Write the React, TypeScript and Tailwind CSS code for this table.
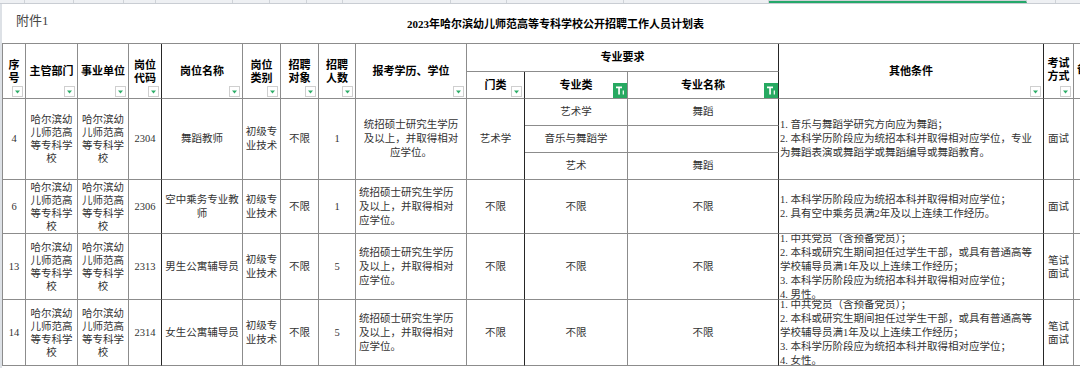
import React from "react";

type CellProps = { children?: React.ReactNode; className?: string; dark?: boolean };

function Cell({ children, className = "", dark = false }: CellProps) {
  return (
    <div
      className={`relative overflow-hidden border-b border-r border-b-[#8c8c8c] ${
        dark ? "border-r-[#262626]" : "border-r-[#8c8c8c]"
      } flex items-center ${className}`}
    >
      {children}
    </div>
  );
}

function Lines({ lines, className = "" }: { lines: string[]; className?: string }) {
  return (
    <div className={className}>
      {lines.map((l, i) => (
        <div key={i} className="whitespace-nowrap">
          {l}
        </div>
      ))}
    </div>
  );
}

function Drop() {
  return (
    <span className="absolute right-[2px] bottom-[1px] w-[11px] h-[11px] bg-white border border-[#cfcfcf] flex items-center justify-center">
      <svg width="5" height="4" viewBox="0 0 5 4">
        <path d="M0 0.5H5L2.5 3.5Z" fill="#2fae69" />
      </svg>
    </span>
  );
}

function Filt() {
  return (
    <span className="absolute right-0 bottom-0 w-[14px] h-[15px] bg-[#27a961] flex items-center justify-center">
      <svg width="10" height="11" viewBox="0 0 10 11">
        <path d="M1 1.5H7V3.2H4.9V9.5H3.2V3.2H1Z" fill="#ffffff" />
        <path d="M8.3 5.5V9.5" stroke="#ffffff" strokeWidth="1.2" />
      </svg>
    </span>
  );
}

const UNIT = ["哈尔滨幼", "儿师范高", "等专科学", "校"];
const CAT = ["初级专", "业技术"];
const EDU = ["统招硕士研究生学历", "及以上，并取得相对", "应学位。"];

const strip = [
  { w: "w-[25px]", sel: false },
  { w: "w-[49px]", sel: false },
  { w: "w-[50px]", sel: false },
  { w: "w-[32px]", sel: false },
  { w: "w-[77px]", sel: false },
  { w: "w-[37px]", sel: false },
  { w: "w-[37px]", sel: false },
  { w: "w-[36px]", sel: false },
  { w: "w-[108px]", sel: false },
  { w: "w-[56px]", sel: false },
  { w: "w-[117px]", sel: false },
  { w: "w-[145px]", sel: false },
  { w: "w-[258px]", sel: true },
  { w: "w-[29px]", sel: false },
  { w: "w-[60px]", sel: false },
];

type RowProps = {
  no: string;
  code: string;
  name: string[];
  count: string;
  other: string[];
  exam: string[];
  eduCenter?: boolean;
};

function DataRow({ no, code, name, count, other, exam, eduCenter = false }: RowProps) {
  return (
    <>
      <Cell className="justify-center">{no}</Cell>
      <Cell className="justify-center">
        <Lines lines={UNIT} className="text-center leading-[13px]" />
      </Cell>
      <Cell className="justify-center">
        <Lines lines={UNIT} className="text-center leading-[13px]" />
      </Cell>
      <Cell className="justify-center" dark>
        {code}
      </Cell>
      <Cell className="justify-center">
        <Lines lines={name} className="text-center leading-[14px]" />
      </Cell>
      <Cell className="justify-center">
        <Lines lines={CAT} className="text-center leading-[14px]" />
      </Cell>
      <Cell className="justify-center">不限</Cell>
      <Cell className="justify-center">{count}</Cell>
      <Cell className={eduCenter ? "justify-center" : "justify-start pl-[3px]"}>
        <Lines lines={EDU} className={eduCenter ? "text-center leading-[14px]" : "text-left leading-[14px]"} />
      </Cell>
      <Cell className="justify-center" dark>
        不限
      </Cell>
      <Cell className="justify-center">不限</Cell>
      <Cell className="justify-center" dark>
        不限
      </Cell>
      <Cell className="justify-start pl-[1px]" dark>
        <Lines lines={other} className="text-left leading-[14px]" />
      </Cell>
      <Cell className="justify-center">
        <Lines lines={exam} className="text-center leading-[13px]" />
      </Cell>
      <Cell className="justify-center" />
    </>
  );
}

export default function App() {
  return (
    <div className="w-[1080px] h-[368px] overflow-hidden bg-white flex flex-col font-['Liberation_Serif','Noto_Sans_CJK_SC',serif] text-[10.5px] text-[#333333]">
      {/* column header strip */}
      <div className="h-[4px] flex bg-[#eef0f3] border-b border-[#c9cdd3] shrink-0">
        {strip.map((s, i) => (
          <div
            key={i}
            className={`${s.w} shrink-0 h-full border-r border-r-[#cfd3d8] ${
              s.sel ? "bg-[#cfd2d6] border-b-2 border-b-[#25a86a]" : ""
            }`}
          />
        ))}
      </div>

      <div className="flex flex-1">
        <div className="w-[2px] shrink-0 bg-[#dde1e6]" />
        <div className="flex flex-col">
          {/* title row */}
          <div className="h-[40px] flex border-b border-[#8c8c8c] w-[1101px]">
            <div className="w-[405px] shrink-0 pt-[9px] pl-[14px] text-[13px] leading-[16px] text-[#454545]">
              附件1
            </div>
            <div className="pt-[13px] text-[11px] leading-[14px] font-bold text-black whitespace-nowrap">
              2023年哈尔滨幼儿师范高等专科学校公开招聘工作人员计划表
            </div>
          </div>

          {/* table grid */}
          <div className="grid grid-cols-[23px_52px_51px_33px_81px_38px_38px_37px_111px_58px_103px_151px_265px_30px_30px] grid-rows-[28px_27px_27px_27px_27px_54px_66px_66px] border-l border-l-[#8c8c8c]">
            {/* header row */}
            <Cell className="row-span-2 justify-center font-bold text-black text-[11px]">
              <Lines lines={["序", "号"]} className="text-center leading-[13px] mt-[2px]" />
              <Drop />
            </Cell>
            <Cell className="row-span-2 justify-center font-bold text-black text-[11px]">
              <span className="mt-[1px]">主管部门</span>
              <Drop />
            </Cell>
            <Cell className="row-span-2 justify-center font-bold text-black text-[11px]">
              <span className="mt-[1px]">事业单位</span>
              <Drop />
            </Cell>
            <Cell className="row-span-2 justify-center font-bold text-black text-[11px]" dark>
              <Lines lines={["岗位", "代码"]} className="text-center leading-[13px] mt-[2px]" />
              <Drop />
            </Cell>
            <Cell className="row-span-2 justify-center font-bold text-black text-[11px]">
              <span className="mt-[1px]">岗位名称</span>
              <Drop />
            </Cell>
            <Cell className="row-span-2 justify-center font-bold text-black text-[11px]">
              <Lines lines={["岗位", "类别"]} className="text-center leading-[13px] mt-[2px]" />
              <Drop />
            </Cell>
            <Cell className="row-span-2 justify-center font-bold text-black text-[11px]">
              <Lines lines={["招聘", "对象"]} className="text-center leading-[13px] mt-[2px]" />
              <Drop />
            </Cell>
            <Cell className="row-span-2 justify-center font-bold text-black text-[11px]">
              <Lines lines={["招聘", "人数"]} className="text-center leading-[13px] mt-[2px]" />
              <Drop />
            </Cell>
            <Cell className="row-span-2 justify-center font-bold text-black text-[11px]">
              <span className="mt-[1px]">报考学历、学位</span>
              <Drop />
            </Cell>
            <Cell className="col-span-3 justify-center font-bold text-black text-[11px]" dark>
              专业要求
            </Cell>
            <Cell className="row-span-2 justify-center font-bold text-black text-[11px]" dark>
              <span className="mt-[1px]">其他条件</span>
              <Drop />
            </Cell>
            <Cell className="row-span-2 justify-center font-bold text-black text-[11px]">
              <Lines lines={["考试", "方式"]} className="text-center leading-[13px] -mt-[2px]" />
              <Drop />
            </Cell>
            <Cell className="row-span-2 justify-start pl-[3px] font-bold text-black text-[11px]">
              <span className="-mt-[4px]">备注</span>
            </Cell>
            {/* header row 2 */}
            <Cell className="justify-center font-bold text-black text-[11px]" dark>
              <span>门类</span>
              <Drop />
            </Cell>
            <Cell className="justify-center font-bold text-black text-[11px]">
              专业类
              <Filt />
            </Cell>
            <Cell className="justify-center font-bold text-black text-[11px]" dark>
              专业名称
              <Filt />
            </Cell>

            {/* row 4 */}
            <Cell className="row-span-3 justify-center">4</Cell>
            <Cell className="row-span-3 justify-center">
              <Lines lines={UNIT} className="text-center leading-[13px]" />
            </Cell>
            <Cell className="row-span-3 justify-center">
              <Lines lines={UNIT} className="text-center leading-[13px]" />
            </Cell>
            <Cell className="row-span-3 justify-center" dark>
              2304
            </Cell>
            <Cell className="row-span-3 justify-center">舞蹈教师</Cell>
            <Cell className="row-span-3 justify-center">
              <Lines lines={CAT} className="text-center leading-[14px]" />
            </Cell>
            <Cell className="row-span-3 justify-center">不限</Cell>
            <Cell className="row-span-3 justify-center">1</Cell>
            <Cell className="row-span-3 justify-center">
              <Lines lines={EDU} className="text-center leading-[14px]" />
            </Cell>
            <Cell className="row-span-3 justify-center" dark>
              艺术学
            </Cell>
            <Cell className="justify-center">艺术学</Cell>
            <Cell className="justify-center" dark>
              舞蹈
            </Cell>
            <Cell className="row-span-3 justify-start pl-[1px]" dark>
              <Lines
                lines={[
                  "1. 音乐与舞蹈学研究方向应为舞蹈；",
                  "2. 本科学历阶段应为统招本科并取得相对应学位，专业",
                  "为舞蹈表演或舞蹈学或舞蹈编导或舞蹈教育。",
                ]}
                className="text-left leading-[14px]"
              />
            </Cell>
            <Cell className="row-span-3 justify-center">面试</Cell>
            <Cell className="row-span-3 justify-center" />
            <Cell className="justify-center">音乐与舞蹈学</Cell>
            <Cell className="justify-center" dark />
            <Cell className="justify-center">艺术</Cell>
            <Cell className="justify-center" dark>
              舞蹈
            </Cell>

            {/* row 6 */}
            <DataRow
              no="6"
              code="2306"
              name={["空中乘务专业教", "师"]}
              count="1"
              other={["1. 本科学历阶段应为统招本科并取得相对应学位；", "2. 具有空中乘务员满2年及以上连续工作经历。"]}
              exam={["面试"]}
            />
            {/* row 13 */}
            <DataRow
              no="13"
              code="2313"
              name={["男生公寓辅导员"]}
              count="5"
              other={[
                "1. 中共党员（含预备党员）；",
                "2. 本科或研究生期间担任过学生干部，或具有普通高等",
                "学校辅导员满1年及以上连续工作经历；",
                "3. 本科学历阶段应为统招本科并取得相对应学位；",
                "4. 男性。",
              ]}
              exam={["笔试", "面试"]}
            />
            {/* row 14 */}
            <DataRow
              no="14"
              code="2314"
              name={["女生公寓辅导员"]}
              count="5"
              other={[
                "1. 中共党员（含预备党员）；",
                "2. 本科或研究生期间担任过学生干部，或具有普通高等",
                "学校辅导员满1年及以上连续工作经历；",
                "3. 本科学历阶段应为统招本科并取得相对应学位；",
                "4. 女性。",
              ]}
              exam={["笔试", "面试"]}
            />
          </div>
        </div>
      </div>
    </div>
  );
}
